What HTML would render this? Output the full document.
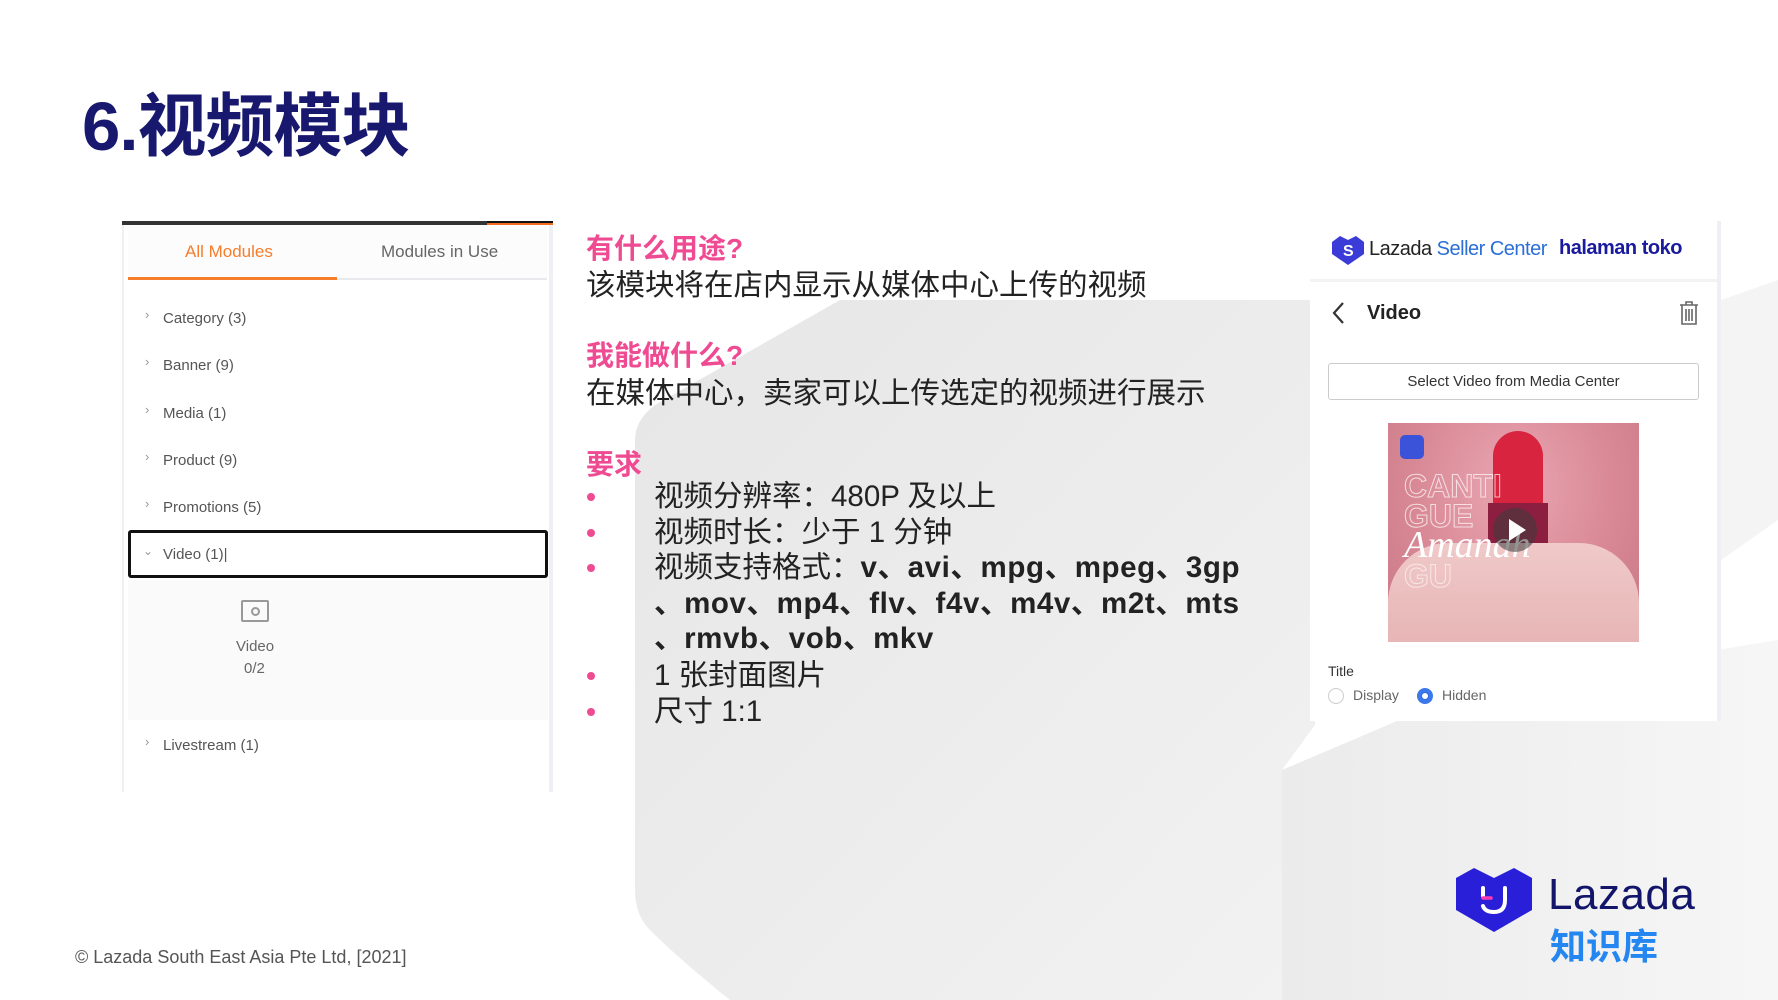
<!DOCTYPE html>
<html><head><meta charset="utf-8">
<style>
*{margin:0;padding:0;box-sizing:border-box}
body{width:1778px;height:1000px;position:relative;overflow:hidden;background:#fff;font-family:"Liberation Sans","Noto Sans CJK SC",sans-serif}
.a{position:absolute;white-space:nowrap}
.row{position:absolute;left:163px;font-size:15px;color:#555}
.arr{position:absolute;left:145px;font-size:13px;color:#999}
.pk{color:#ef4b92;font-weight:bold;font-size:28px}
.bd{font-size:29.5px;color:#222}
.li{position:absolute;left:654px;font-size:29.5px;color:#222}
.li b{letter-spacing:0.6px}
.dot{position:absolute;left:587px;width:8px;height:8px;border-radius:50%;background:#ef4b92}
</style></head><body>
<svg class="a" style="left:0;top:0" width="1778" height="1000">
<defs>
<linearGradient id="g1" x1="0" y1="0" x2="1" y2="1"><stop offset="0" stop-color="#e6e6e6"/><stop offset="1" stop-color="#f2f2f2"/></linearGradient>
<linearGradient id="g2" x1="0" y1="0" x2="1" y2="0"><stop offset="0" stop-color="#ebebeb"/><stop offset="1" stop-color="#f6f6f6"/></linearGradient>
</defs>
<path d="M635 440 Q635 420 655 405 L840 300 L1315 300 L1315 725 L1282 770 L1282 1000 L730 1000 Q680 960 650 930 Q635 915 635 890 Z" fill="url(#g1)"/>
<path d="M1282 770 L1470 690 L1778 640 L1778 1000 L1282 1000 Z" fill="url(#g2)"/>
<path d="M1721 300 L1778 280 L1778 520 L1721 560 Z" fill="#f4f4f4"/>
</svg>

<div class="a" style="left:82px;top:70px;font-size:69px;font-weight:bold;color:#17186e;letter-spacing:-1px">6.视频模块</div>

<!-- left panel -->
<div class="a" style="left:122px;top:221px;width:431px;height:571px;background:#fff;border-left:2px solid #f0f0f0;border-right:4px solid #eef0f3"></div>
<div class="a" style="left:122px;top:221px;width:431px;height:4px;background:#333"></div>
<div class="a" style="left:487px;top:221px;width:66px;height:4px;background:#111;border-bottom:2px solid #f36d21"></div>
<div class="a" style="left:128px;top:226px;width:419px;height:54px;background:#fcfcfc;border-bottom:2px solid #e8eaee"></div>
<div class="a" style="left:128px;top:277px;width:209px;height:3px;background:#f57d2c"></div>
<div class="a" style="left:185px;top:242px;font-size:17px;color:#f57d2c">All Modules</div>
<div class="a" style="left:381px;top:242px;font-size:17px;color:#666">Modules in Use</div>
<div class="arr" style="top:307px">›</div><div class="row" style="top:310px">Category (3)</div>
<div class="arr" style="top:354px">›</div><div class="row" style="top:357px">Banner (9)</div>
<div class="arr" style="top:402px">›</div><div class="row" style="top:405px">Media (1)</div>
<div class="arr" style="top:449px">›</div><div class="row" style="top:452px">Product (9)</div>
<div class="arr" style="top:496px">›</div><div class="row" style="top:499px">Promotions (5)</div>
<div class="a" style="left:128px;top:530px;width:420px;height:48px;border:3px solid #111;border-radius:3px;background:#fff"></div>
<div class="a" style="left:143px;top:544px;font-size:12px;color:#999">⌄</div>
<div class="row" style="top:546px">Video (1)|</div>
<div class="a" style="left:128px;top:580px;width:420px;height:140px;background:#fafafa"></div>
<div class="a" style="left:241px;top:600px;width:28px;height:22px;border:2px solid #999;border-radius:2px"></div>
<div class="a" style="left:251px;top:607px;width:9px;height:9px;border:2px solid #999;border-radius:50%"></div>
<div class="a" style="left:236px;top:638px;font-size:15px;color:#666">Video</div>
<div class="a" style="left:244px;top:660px;font-size:15px;color:#666">0/2</div>
<div class="arr" style="top:734px">›</div><div class="row" style="top:737px">Livestream (1)</div>

<!-- middle text -->
<div class="a pk" style="left:586px;top:227px">有什么用途?</div>
<div class="a bd" style="left:586px;top:262px">该模块将在店内显示从媒体中心上传的视频</div>
<div class="a pk" style="left:586px;top:334px">我能做什么?</div>
<div class="a bd" style="left:586px;top:370px">在媒体中心，卖家可以上传选定的视频进行展示</div>
<div class="a pk" style="left:586px;top:443px">要求</div>
<div class="dot" style="top:493px"></div><div class="li" style="top:473px">视频分辨率：480P 及以上</div>
<div class="dot" style="top:529px"></div><div class="li" style="top:509px">视频时长：少于 1 分钟</div>
<div class="dot" style="top:564px"></div><div class="li" style="top:544px">视频支持格式：<b>v、avi、mpg、mpeg、3gp</b></div>
<div class="li" style="top:580px;left:654px"><b>、mov、mp4、flv、f4v、m4v、m2t、mts</b></div>
<div class="li" style="top:615px;left:654px"><b>、rmvb、vob、mkv</b></div>
<div class="dot" style="top:672px"></div><div class="li" style="top:652px">1 张封面图片</div>
<div class="dot" style="top:708px"></div><div class="li" style="top:688px">尺寸 1:1</div>

<!-- right panel -->
<div class="a" style="left:1310px;top:221px;width:411px;height:500px;background:#fff;border-right:4px solid #eef0f3"></div>
<div class="a" style="left:1310px;top:279px;width:407px;height:3px;background:#f3f3f3"></div>
<svg class="a" style="left:1330px;top:234px" width="36" height="32" viewBox="0 0 36 32"><path d="M2 8 L10 2 L18 6 L26 2 L34 8 L34 20 L18 31 L2 20 Z" fill="#3b3bd8"/><text x="13" y="22" font-size="16" fill="#fff" font-family="Liberation Sans" font-weight="bold">S</text></svg>
<div class="a" style="left:1369px;top:238px;font-size:20px;color:#222;letter-spacing:-0.5px">Lazada <span style="color:#2b6fd6">Seller Center</span></div>
<div class="a" style="left:1559px;top:237px;font-size:20px;font-weight:bold;color:#1a1a9e;letter-spacing:-0.5px">halaman toko</div>
<svg class="a" style="left:1330px;top:300px" width="16" height="26"><path d="M13 3 L4 13 L13 23" stroke="#333" stroke-width="2.2" fill="none"/></svg>
<div class="a" style="left:1367px;top:302px;font-size:20px;font-weight:bold;color:#222">Video</div>
<svg class="a" style="left:1678px;top:300px" width="22" height="26"><path d="M2 5 H20 M8 5 V2 H14 V5 M4 5 V24 H18 V5 M8 9 V21 M11 9 V21 M14 9 V21" stroke="#666" stroke-width="1.6" fill="none"/></svg>
<div class="a" style="left:1328px;top:363px;width:371px;height:37px;border:1px solid #ccc;border-radius:3px;font-size:15px;color:#333;text-align:center;line-height:35px">Select Video from Media Center</div>
<div class="a" style="left:1388px;top:423px;width:251px;height:219px;overflow:hidden;background:radial-gradient(ellipse at 50% 30%,#e9a7b2,#d98996 55%,#c97784);">
  <div class="a" style="left:0;top:120px;width:251px;height:110px;background:linear-gradient(180deg,#f0c9c9,#e6b3b3);border-radius:60px 60px 0 0"></div>
  <div class="a" style="left:105px;top:8px;width:50px;height:80px;background:#d8243f;border-radius:25px 25px 4px 4px"></div>
  <div class="a" style="left:100px;top:80px;width:60px;height:40px;background:#8c1f40"></div>
  <div class="a" style="left:12px;top:12px;width:24px;height:24px;background:#3b53d8;border-radius:5px"></div>
  <div class="a" style="left:16px;top:45px;font-size:32px;font-weight:bold;color:transparent;-webkit-text-stroke:1px #fff;opacity:.7">CANTI</div>
  <div class="a" style="left:16px;top:75px;font-size:32px;font-weight:bold;color:transparent;-webkit-text-stroke:1px #fff;opacity:.7">GUE</div>
  <div class="a" style="left:16px;top:100px;font-size:38px;color:#fff;font-family:'Liberation Serif',serif;font-style:italic">Amanah</div>
  <div class="a" style="left:16px;top:135px;font-size:32px;font-weight:bold;color:transparent;-webkit-text-stroke:1px #fff;opacity:.6">GU</div>
  <div class="a" style="left:105px;top:85px;width:44px;height:44px;border-radius:50%;background:rgba(60,60,60,.55)"></div>
  <div class="a" style="left:121px;top:96px;width:0;height:0;border-left:17px solid #fff;border-top:11px solid transparent;border-bottom:11px solid transparent"></div>
</div>
<div class="a" style="left:1328px;top:663px;font-size:14px;color:#333">Title</div>
<div class="a" style="left:1328px;top:688px;width:16px;height:16px;border:1px solid #ccc;border-radius:50%"></div>
<div class="a" style="left:1353px;top:687px;font-size:14px;color:#666">Display</div>
<div class="a" style="left:1417px;top:688px;width:16px;height:16px;border-radius:50%;background:#2f6ce5;border:4px solid #3b78ea"><div style="width:6px;height:6px;margin:1px;border-radius:50%;background:#fff"></div></div>
<div class="a" style="left:1442px;top:687px;font-size:14px;color:#666">Hidden</div>

<!-- bottom logo -->
<svg class="a" style="left:1454px;top:866px" width="80" height="68" viewBox="0 0 80 68"><path d="M2 12 L20 2 L40 12 L60 2 L78 12 L78 44 L40 66 L2 44 Z" fill="#2a1fd8"/><path d="M29 22 V30 M51 22 V34 Q51 46 40 46 Q31 46 29 40" stroke="#fff" stroke-width="4" fill="none" stroke-linecap="round"/><path d="M29 32 H37" stroke="#ff3bb0" stroke-width="3.5" stroke-linecap="round"/></svg>
<div class="a" style="left:1548px;top:870px;font-size:44px;color:#13156b;letter-spacing:0.5px">Lazada</div>
<div class="a" style="left:1550px;top:918px;font-size:36px;color:#2486f0;font-weight:bold">知识库</div>

<div class="a" style="left:75px;top:947px;font-size:18px;color:#555">© Lazada South East Asia Pte Ltd, [2021]</div>
</body></html>
